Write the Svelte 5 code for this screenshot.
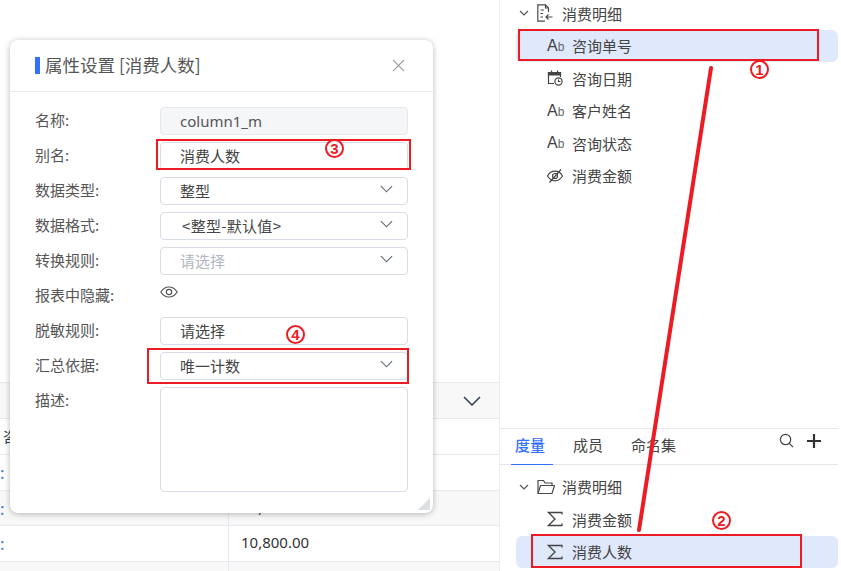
<script lang="ts">
  const fields = [
    { label: "名称:", kind: "input", value: "column1_m", disabled: true },
    { label: "别名:", kind: "input", value: "消费人数" },
    { label: "数据类型:", kind: "select", value: "整型" },
    { label: "数据格式:", kind: "select", value: "<整型-默认值>", wide: true },
    { label: "转换规则:", kind: "select", value: "请选择", placeholder: true },
    { label: "报表中隐藏:", kind: "eye" },
    { label: "脱敏规则:", kind: "input", value: "请选择" },
    { label: "汇总依据:", kind: "select", value: "唯一计数" },
  ];
  const dims = [
    { name: "咨询单号", icon: "ab", active: true },
    { name: "咨询日期", icon: "date" },
    { name: "客户姓名", icon: "ab" },
    { name: "咨询状态", icon: "ab" },
    { name: "消费金额", icon: "hide" },
  ];
  const measures = [
    { name: "消费金额", active: false },
    { name: "消费人数", active: true },
  ];
  const tabs = ["度量", "成员", "命名集"];
  const rows = [
    { first: "咨", val: "" },
    { first: ":", val: "", link: true },
    { first: ":", val: "10,800.00", link: true, stripe: true },
    { first: ":", val: "10,800.00", link: true },
    { first: "", val: "", stripe: true },
  ];
  // 红色标注框
  const marks = [
    { l: 518, t: 29, w: 301, h: 32 },
    { l: 531, t: 534, w: 271, h: 34 },
    { l: 156, t: 139, w: 255, h: 31 },
    { l: 147, t: 348, w: 262, h: 36 },
  ];
  const badges = [
    { n: "1", l: 750, t: 60 },
    { n: "2", l: 712, t: 511 },
    { n: "3", l: 325, t: 139 },
    { n: "4", l: 286, t: 325 },
  ];
</script>

<div class="page">
  <div class="left">
    <div class="tbl">
      <div class="tbl-head">
        <svg class="head-chev" viewBox="0 0 18 10" width="18" height="10"><path d="M1 1l8 8 8-8" fill="none" stroke="#2f3a4c" stroke-width="1.5"/></svg>
      </div>
      {#each rows as r}
        <div class="tbl-row" class:stripe={r.stripe}>
          <div class="cell-a" class:link={r.link}>{r.first}</div>
          <div class="cell-b">{r.val}</div>
        </div>
      {/each}
    </div>
  </div>

  <div class="right">
    <div class="dim-pane">
      <div class="tree-head">
        <svg class="chev" viewBox="0 0 10 6" width="10" height="6"><path d="M1 1l4 4 4-4" fill="none" stroke="#555" stroke-width="1.2"/></svg>
        <svg class="head-ico" viewBox="0 0 16 18" width="16" height="18" fill="none" stroke="#4a4a4a" stroke-width="1.2"><path d="M11.500 8V4L8.500.8H.8v16.400H8"/><path d="M8.500.8V4h3M3.500 6h3.500M3.500 9.500h2.500M3.500 13h2.500"/><path d="M15.500 13H9M11.500 10.500L9 13l2.500 2.500"/></svg>
        <span>消费明细</span>
      </div>
      {#each dims as d}
        <div class="tree-item" class:active={d.active}>
          {#if d.icon === "ab"}
            <span class="ab">A<small>b</small></span>
          {:else if d.icon === "date"}
            <svg class="ico" viewBox="0 0 16 16" width="16" height="16" fill="none" stroke="#444" stroke-width="1.2"><path d="M7 13.500H1.500V2.500h12V7"/><path d="M1.500 2.500h12v2.500h-12z" fill="#444"/><path d="M4.500 .5v2M10.500 .5v2"/><circle cx="11.500" cy="11.500" r="3.600" fill="#fff"/><path d="M11.500 9.500v2h1.800"/></svg>
          {:else}
            <svg class="ico" viewBox="0 0 16 16" width="16" height="16" fill="none" stroke="#444" stroke-width="1.2"><path d="M.5 8C2.300 4.800 5 3.200 8 3.200S13.700 4.800 15.500 8C13.700 11.200 11 12.800 8 12.800S2.300 11.200 .5 8z"/><circle cx="8" cy="8" r="2.500"/><path d="M14 1.500L2.500 14.500"/></svg>
          {/if}
          <span>{d.name}</span>
        </div>
      {/each}
    </div>

    <div class="measure-pane">
      <div class="tabs">
        {#each tabs as t, i}
          <span class="tab" class:on={i === 0}>{t}</span>
        {/each}
        <div class="tab-tools">
          <svg viewBox="0 0 16 16" width="15" height="15" fill="none" stroke="#444" stroke-width="1.3"><circle cx="7" cy="7" r="5.500"/><path d="M11 11l4 4"/></svg>
          <svg viewBox="0 0 16 16" width="16" height="16" fill="none" stroke="#333" stroke-width="2.200"><path d="M8 1v14M1 8h14"/></svg>
        </div>
      </div>
      <div class="tree-head second">
        <svg class="chev" viewBox="0 0 10 6" width="10" height="6"><path d="M1 1l4 4 4-4" fill="none" stroke="#555" stroke-width="1.2"/></svg>
        <svg class="head-ico" viewBox="0 0 18 16" width="18" height="16" fill="none" stroke="#4a4a4a" stroke-width="1.2"><path d="M1 14.500V1.500h5.500l1.500 2.500h7v2.500"/><path d="M1 14.500l2.500-8h14l-2.500 8z"/></svg>
        <span>消费明细</span>
      </div>
      {#each measures as m}
        <div class="tree-item" class:active={m.active}>
          <svg class="ico" viewBox="0 0 16 16" width="16" height="16" fill="none" stroke="#444" stroke-width="1.3"><path d="M15 3.500V1.500H1.500L8 8l-6.500 6.500H15V12.500"/></svg>
          <span>{m.name}</span>
        </div>
      {/each}
    </div>
  </div>

  <div class="dialog">
    <div class="dlg-head">
      <i class="bar"></i>
      <span class="dlg-title">属性设置 [消费人数]</span>
      <svg class="close" viewBox="0 0 14 14" width="13" height="13" fill="none" stroke="#9a9a9a" stroke-width="1.2"><path d="M1 1l12 12M13 1L1 13"/></svg>
    </div>
    <div class="dlg-body">
      {#each fields as f}
        <div class="field">
          <span class="label">{f.label}</span>
          {#if f.kind === "eye"}
            <svg class="eye" viewBox="0 0 18 14" width="18" height="14" fill="none" stroke="#555" stroke-width="1.2"><path d="M.8 7C3 3.500 5.800 2 9 2s6 1.500 8.200 5C15 10.500 12.200 12 9 12S3 10.500 .8 7z"/><circle cx="9" cy="7" r="2.700"/></svg>
          {:else}
            <div class="box" class:disabled={f.disabled} class:ph={f.placeholder} class:wide={f.wide}>
              <span>{f.value}</span>
              {#if f.kind === "select"}
                <svg viewBox="0 0 14 8" width="13" height="8" fill="none" stroke="#5c6675" stroke-width="1.200"><path d="M1 1l6 6 6-6"/></svg>
              {/if}
            </div>
          {/if}
        </div>
      {/each}
      <div class="field last">
        <span class="label">描述:</span>
        <div class="box area"></div>
      </div>
    </div>
    <svg class="grip" viewBox="0 0 12 12" width="12" height="12"><path d="M12 0v12H0z" fill="#dcdfe4"/></svg>
  </div>

  <svg class="arrow" width="841" height="571" viewBox="0 0 841 571"><path d="M711 68L639 530" stroke="#ed1c24" stroke-width="4" stroke-linecap="round"/></svg>
  {#each badges as b}
    <span class="badge" style="left:{b.l}px;top:{b.t}px">{b.n}</span>
  {/each}
  {#each marks as m}
    <div class="mark" style="left:{m.l}px;top:{m.t}px;width:{m.w}px;height:{m.h}px"></div>
  {/each}
</div>

<style>
  :global(body) { margin: 0; background: #fff; }
  .page {
    position: relative;
    display: flex;
    width: 841px;
    height: 571px;
    overflow: hidden;
    font-family: "Noto Sans CJK SC", "Liberation Sans", sans-serif;
    font-size: 15px;
    color: #333;
  }

  /* 背后的表格 */
  .left { width: 500px; flex-shrink: 0; padding-top: 382px; box-sizing: border-box; border-right: 1px solid #eceef2; }
  .tbl-head {
    height: 37px;
    background: #f8f8f8;
    border-top: 1px solid #e6e9f0;
    border-bottom: 1px solid #e6e9f0;
    box-sizing: border-box;
    display: flex;
    align-items: center;
    justify-content: flex-end;
    padding-right: 18px;
  }
  .tbl-row { height: 35.750px; display: flex; border-bottom: 1px solid #e6e9f0; box-sizing: border-box; }
  .tbl-row.stripe { background: #f8f8f8; }
  .cell-a { width: 229px; flex-shrink: 0; box-sizing: border-box; border-right: 1px solid #e6e9f0; padding-left: 3px; font-size: 14px; line-height: 34px; color: #2c3a50; overflow: hidden; }
  .cell-a.link { color: #2f7fe0; padding-left: 0; font-size: 16px; }
  .cell-b { padding-left: 12px; line-height: 33px; color: #333; font-family: "Noto Sans", "Open Sans", sans-serif; font-size: 15px; }

  /* 右侧字段树 */
  .right { flex: 1; display: flex; flex-direction: column; padding-right: 3px; }
  .dim-pane { height: 428px; flex-shrink: 0; box-sizing: border-box; }
  .measure-pane { border-top: 1px solid #e8e8e8; }
  .tree-head {
    height: 26px;
    margin-bottom: 3.500px;
    display: flex;
    align-items: center;
    padding-left: 19px;
    gap: 8px;
    color: #444;
  }
  .tree-head .head-ico { flex-shrink: 0; margin-right: 1px; }
  .tree-head.second { margin-bottom: 3px; height: 27px; }
  .tree-head.second .head-ico { margin-right: -1px; }
  .tree-item {
    height: 32.500px;
    display: flex;
    align-items: center;
    padding-left: 31px;
    gap: 9px;
    margin-left: 16px;
    color: #444;
    border-radius: 6px;
  }
  .tree-item.active { background: #e0e8fb; }
  .ab { width: 16px; font-family: "Liberation Sans", sans-serif; font-size: 16px; color: #444; white-space: nowrap; }
  .ab small { font-size: 12px; color: #666; }
  .ico { width: 16px; flex-shrink: 0; }
  .tabs {
    height: 36px;
    box-sizing: border-box;
    display: flex;
    align-items: flex-start;
    border-bottom: 1px solid #e3e5e8;
    padding-left: 11px;
    margin-bottom: 8px;
  }
  .tab { height: 36px; line-height: 32px; margin-right: 28px; box-sizing: border-box; color: #444; }
  .tab.on { color: #3370ff; border-bottom: 1px solid #3370ff; padding: 0 8px 0 4px; margin-right: 20px; font-weight: 500; }
  .tab-tools { margin-left: auto; margin-right: 16px; margin-top: 4px; display: flex; gap: 12px; }

  /* 属性弹窗 */
  .dialog {
    position: absolute;
    left: 10px;
    top: 40px;
    width: 423px;
    height: 473px;
    background: #fff;
    border-radius: 8px;
    box-shadow: 0 1px 6px rgba(0, 0, 0, 0.28);
  }
  .dlg-head {
    height: 52px;
    display: flex;
    align-items: center;
    padding: 0 28px 0 25px;
    border-bottom: 1px solid #e8eaee;
    box-sizing: border-box;
  }
  .bar { width: 5px; height: 17px; background: #3370ff; margin-right: 5px; }
  .dlg-title { font-size: 17.500px; color: #555; flex: 1; margin-top: -2px; }
  .dlg-body { padding: 15px 25px 0 25px; }
  .field { display: flex; height: 35px; }
  .label { width: 125px; flex-shrink: 0; line-height: 26px; color: #555; }
  .box {
    width: 248px;
    height: 28px;
    box-sizing: border-box;
    border: 1px solid #d8dce6;
    border-radius: 4px;
    display: flex;
    align-items: center;
    justify-content: space-between;
    padding: 0 14px 2px 19px;
    color: #444;
  }
  .box.disabled { background: #f5f6f8; border-color: #e6e8ec; color: #555; font-family: "Noto Sans", "Open Sans", sans-serif; padding-bottom: 0; }
  .box.ph { color: #b0b6c2; }
  .box.wide { padding-left: 21px; letter-spacing: 0.300px; }
  .box svg { margin-top: -2px; }
  .eye { margin-top: 3px; }
  .field.last { height: auto; }
  .area { height: 105px; }
  .grip { position: absolute; right: 3px; bottom: 3px; }

  /* 标注层 */
  .arrow { position: absolute; left: 0; top: 0; pointer-events: none; }
  .mark { position: absolute; box-sizing: border-box; border: 2px solid #ed1c24; }
  .badge {
    position: absolute;
    width: 19px;
    height: 19px;
    box-sizing: border-box;
    border: 2px solid #ed1c24;
    border-radius: 50%;
    background: #fff;
    display: flex;
    align-items: center;
    justify-content: center;
    font-family: "Liberation Sans", sans-serif;
    font-size: 15px;
    font-weight: 700;
    color: #ed1c24;
  }
</style>
